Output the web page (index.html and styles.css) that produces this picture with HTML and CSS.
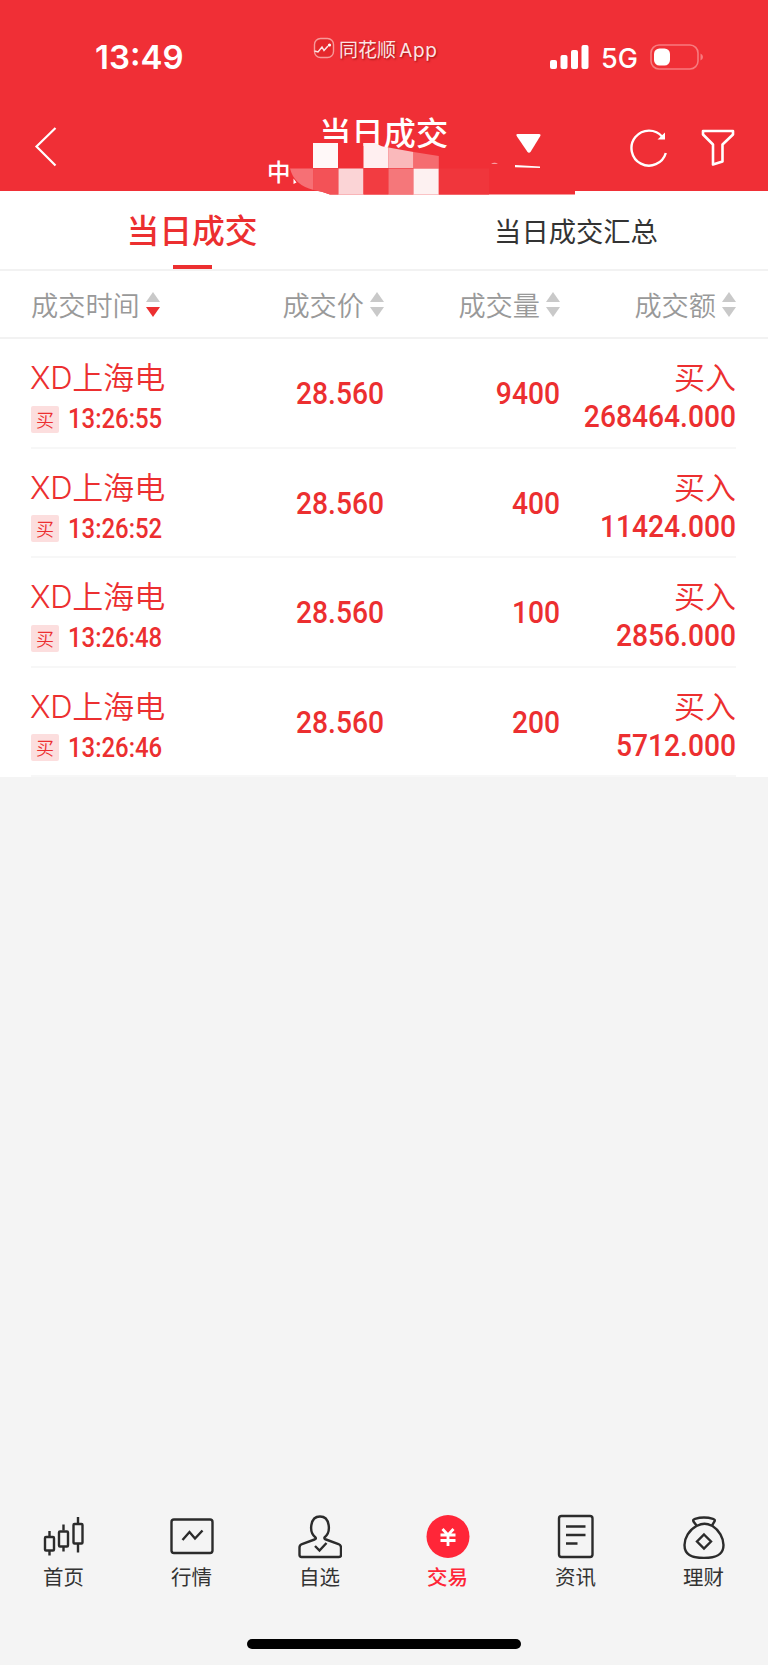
FILE: index.html
```html
<!DOCTYPE html>
<html lang="zh-CN">
<head>
    <meta charset="UTF-8">
    <meta name="viewport" content="width=device-width, initial-scale=1.0">
    <title>当日成交</title>

    <link rel="stylesheet" href="styles.css">

</head>
<body>

    <header class="header">

        <div class="status-bar">
            <div class="clock">13:49</div>
            <div class="app-name">
                <svg width="22" height="24" viewBox="0 -1.500 22 24" fill="none">
                    <rect x="1.500" y="1" width="19" height="19" rx="6" fill="#e5282c" stroke="#f79a9a" stroke-width="1.4"/>
                    <path d="M1.500 13.500L5 14.500L9 9.500L11 13L15 8.500" stroke="#fde4e4" stroke-width="1.5"/>
                    <circle cx="16.500" cy="7.500" r="1.600" fill="#fff"/>
                </svg>
                <span>同花顺 <b>App</b></span>
            </div>
            <div class="status-icons">
                <svg width="39" height="26" viewBox="0 0 39 26" fill="#fff">
                    <rect x="0" y="16" width="7" height="9" rx="2"/>
                    <rect x="10.500" y="11" width="7" height="14" rx="2"/>
                    <rect x="21" y="6" width="7" height="19" rx="2"/>
                    <rect x="31.500" y="1" width="7" height="24" rx="2"/>
                </svg>
                <span>5G</span>
                <svg width="54" height="26" viewBox="0 0 54 26" fill="none">
                    <rect x="1" y="1" width="47" height="24" rx="8" stroke="#f77b7f" stroke-width="1.6"/>
                    <rect x="4" y="4.500" width="16" height="17" rx="5.500" fill="#fff"/>
                    <path d="M50.500 9.500Q53 10.500 53 13T50.500 16.500Z" fill="#f77b7f"/>
                </svg>
            </div>
        </div>

        <div class="nav">
            <svg class="back" width="24" height="42" viewBox="0 0 24 42" fill="none" stroke="#fff" stroke-width="2.2">
                <path d="M21.500 2L2.500 20.500L21.500 39.500"/>
            </svg>
            <div class="nav-title">
                <h1>当日成交</h1>
                <div class="account">中</div>
            </div>
            <svg class="dropdown" width="28" height="38" viewBox="0 0 28 38" fill="#fff">
                <path d="M3.500 2H25Q27.500 2 26 4.500L16.800 19.500Q15 22 13.200 19.500L3 4.500Q1.500 2 3.500 2Z"/>
                <path d="M1 33L26 34.500V36L1 35.200Z"/>
            </svg>
            <svg class="refresh" width="40" height="40" viewBox="0 0 40 40" fill="none" stroke="#fff" stroke-width="2.400">
                <path d="M36.800 25A17.500 17.500 0 1 1 33.500 9"/>
                <path d="M36 4.500V11.500H28.500Z" fill="#fff" stroke="none"/>
            </svg>
            <svg class="filter" width="34" height="38" viewBox="0 0 34 38" fill="none" stroke="#fff" stroke-width="2.600" stroke-linejoin="round">
                <path d="M2 2H32V5.500L21.500 15.500V32.500L12 35.500V15.500L2 5.500Z"/>
            </svg>
        </div>

        <!-- mosaic over the account name -->
        <svg class="mosaic" width="320" height="60" viewBox="260 140 320 60">
            <path d="M313 190H575V194.500H330Q322 191 313 190Z" fill="#f02e35"/>
            <path d="M313 143H338V168H313Z" fill="#fff8f8"/>
            <path d="M338 143H363.500V168H338Z" fill="#f02e35"/>
            <path d="M363.500 143H375Q382 147 388.500 147.500V168H363.500Z" fill="#ffeff0"/>
            <path d="M388.500 147.500L413.500 152V168H388.500Z" fill="#fab9bb"/>
            <path d="M413.500 152L438.800 156V168H413.500Z" fill="#f56c70"/>
            <path d="M290 168.500H313.500V190Q294 185 290 168.500Z" fill="#f67075"/>
            <path d="M313.500 168.500H338.500V194.500H330Q322 191 313.500 190Z" fill="#f35257"/>
            <path d="M338.500 168.500H363.500V194.500H338.500Z" fill="#fbd4d6"/>
            <path d="M363.500 168.500H388.500V194.500H363.500Z" fill="#f23c41"/>
            <path d="M388.500 168.500H413.500V194.500H388.500Z" fill="#f5777a"/>
            <path d="M413.500 168.500H438.800V194.500H413.500Z" fill="#fdf1f1"/>
            <path d="M438.800 168.500H489V194.500H438.800Z" fill="#f0363c"/>
            <path d="M491 163.700Q494.500 162 498 163.700Z" fill="#fbc4c6"/>
            <path d="M293.500 178.500L296.500 182.500L293.500 184Z" fill="#fff"/>
        </svg>

    </header>

    <nav class="tabs">
        <div class="tab active"><span>当日成交</span></div>
        <div class="tab">当日成交汇总</div>
    </nav>

    <div class="grid columns">
        <div class="col">成交时间<i class="sort desc"></i></div>
        <div class="col">成交价<i class="sort"></i></div>
        <div class="col">成交量<i class="sort"></i></div>
        <div class="col">成交额<i class="sort"></i></div>
    </div>

    <main class="list">

        <div class="grid row">
            <div class="stock">
                <div class="name"><span>XD</span>上海电</div>
                <div class="time"><span class="tag">买</span><span class="clock-time">13:26:55</span></div>
            </div>
            <div class="num">28.560</div>
            <div class="num">9400</div>
            <div class="amount">
                <div class="name">买入</div>
                <div class="num">268464.000</div>
            </div>
        </div>

        <div class="grid row">
            <div class="stock">
                <div class="name"><span>XD</span>上海电</div>
                <div class="time"><span class="tag">买</span><span class="clock-time">13:26:52</span></div>
            </div>
            <div class="num">28.560</div>
            <div class="num">400</div>
            <div class="amount">
                <div class="name">买入</div>
                <div class="num">11424.000</div>
            </div>
        </div>

        <div class="grid row">
            <div class="stock">
                <div class="name"><span>XD</span>上海电</div>
                <div class="time"><span class="tag">买</span><span class="clock-time">13:26:48</span></div>
            </div>
            <div class="num">28.560</div>
            <div class="num">100</div>
            <div class="amount">
                <div class="name">买入</div>
                <div class="num">2856.000</div>
            </div>
        </div>

        <div class="grid row">
            <div class="stock">
                <div class="name"><span>XD</span>上海电</div>
                <div class="time"><span class="tag">买</span><span class="clock-time">13:26:46</span></div>
            </div>
            <div class="num">28.560</div>
            <div class="num">200</div>
            <div class="amount">
                <div class="name">买入</div>
                <div class="num">5712.000</div>
            </div>
        </div>

    </main>

    <footer class="footer">

        <div class="menu">
            <div class="item">
                <svg width="44" height="46" viewBox="0 0 44 46">
                    <path d="M7.500 18V23M7.500 38V42.500M21.500 11.500V17.500M21.500 34V38.500M36 4V10.500M36 31V39.500"/>
                    <rect x="3" y="24" width="9" height="13.500" rx="1"/>
                    <rect x="17" y="18.500" width="9" height="15" rx="1"/>
                    <rect x="31.500" y="11" width="9" height="19.500" rx="1"/>
                </svg>
                <span>首页</span>
            </div>
            <div class="item">
                <svg width="44" height="46" viewBox="0 0 44 46">
                    <rect x="1.500" y="6.500" width="41" height="33.500" rx="2.500"/>
                    <path d="M12.500 27L19.500 19L25 25.500L32.500 17.500"/>
                </svg>
                <span>行情</span>
            </div>
            <div class="item">
                <svg width="44" height="46" viewBox="0 0 44 46">
                    <path d="M17.500 24.500C10.500 19 12 3.500 22 3.500S33.500 19 26.500 24.500Q26 26 28 26.500L40.500 31Q43 32 43 34.500V42Q43 44 41 44H3.500Q1.500 44 1.500 42V34.500Q1.500 32 4 31L16.500 26.500Q18.500 26 17.500 24.500Z"/>
                    <path d="M17 33L21.500 37.500L28.500 30"/>
                </svg>
                <span>自选</span>
            </div>
            <div class="item active">
                <svg width="44" height="46" viewBox="0 0 44 46">
                    <circle cx="22" cy="23.500" r="21.500" fill="#ff2638" stroke="none"/>
                    <path d="M16.500 16L22 22L27.500 16M14.500 22H29.500M14.500 27.500H29.500M22 21V33" stroke="#fff" stroke-width="2.800"/>
                </svg>
                <span>交易</span>
            </div>
            <div class="item">
                <svg width="44" height="46" viewBox="0 0 44 46">
                    <rect x="5" y="3" width="33.500" height="41" rx="2.500"/>
                    <path d="M12 13.500H31.500M12 22H31.500M12 30.500H23.500"/>
                </svg>
                <span>资讯</span>
            </div>
            <div class="item">
                <svg width="44" height="46" viewBox="0 0 44 46">
                    <path d="M14.500 12.500L11.500 8.500Q10.500 6.500 13 5.800Q22 3.300 31 5.800Q33.500 6.500 32.500 8.500L30 12.500"/>
                    <path d="M14.500 13C21 10 24 10 30.500 13C37 17 41.500 25 41.500 32C41.500 41.500 35 45 22 45S2.500 41.500 2.500 32C2.500 25 7 17 14.500 13Z"/>
                    <path d="M22 21.500L29 28.500L22 35.500L15 28.500Z"/>
                </svg>
                <span>理财</span>
            </div>
        </div>

        <div class="home-bar"></div>

    </footer>

</body>
</html>
```
FILE: styles.css
```css
*
{
    margin: 0;
    padding: 0;
    box-sizing: border-box;
}

body
{
    display: flex;
    flex-direction: column;
    width: 768px;
    height: 1665px;
    background: #f4f4f4;
    font-family: "Noto Sans CJK SC", sans-serif;
    overflow: hidden;
}

svg
{
    display: block;
    flex: none;
}

.header
{
    position: relative;
    height: 191px;
    background: #f02f36;
    color: white;
}

.status-bar
{
    display: grid;
    grid-template-columns: 313px 1fr 218px;
    height: 110px;
    padding-top: 36px;
}

.clock
{
    padding-left: 95px;
    font: 600 33px/43px Inter, sans-serif;
}

.app-name
{
    display: flex;
    gap: 4px;
    font-size: 19px;
    line-height: 26px;
    color: #fde4e4;
    text-shadow: 1px 1px 2px rgb(120 0 0 / 70%);
}

.app-name b
{
    margin-left: -1px;
    font: 400 19px/26px Inter, sans-serif;
    letter-spacing: 0.6px;
}

.status-icons
{
    display: flex;
    height: 42px;
    align-items: center;
    font: 500 27px/42px Inter, sans-serif;
}

.status-icons span
{
    width: 61px;
    padding: 3px 0 0 12px;
    line-height: 42px;
}

.nav
{
    display: flex;
    padding-left: 34px;
}

.back
{
    margin-top: 16px;
}

.nav-title
{
    width: 456px;
    padding-left: 209px;
}

.nav-title h1
{
    margin-top: -1px;
    padding-left: 52px;
    font-size: 32.3px;
    font-weight: 500;
    line-height: 44px;
}

.account
{
    font-size: 23.5px;
    font-weight: 500;
    line-height: 37px;
}

.dropdown
{
    margin-top: 22px;
}

.refresh
{
    margin: 18px 0 0 87px;
}

.filter
{
    margin: 19px 0 0 32px;
}

.mosaic
{
    position: absolute;
    left: 260px;
    top: 140px;
    z-index: 1;
}

.tabs
{
    display: flex;
    height: 80px;
    background: white;
    border-bottom: 2px solid #f2f2f2;
}

.tab
{
    width: 50%;
    text-align: center;
    font-size: 27.3px;
    line-height: 79px;
    color: #333;
}

.tab.active
{
    display: flex;
    flex-direction: column;
    align-items: center;
    font-size: 32.8px;
    font-weight: 500;
    line-height: 75px;
    color: #ec2f30;
}

.tab.active::after
{
    content: '';
    width: 39px;
    height: 4px;
    margin-top: -1px;
    background: #ec2f30;
}

.grid
{
    display: grid;
    grid-template-columns: 177px 176px 176px 176px;
}

.columns
{
    height: 68px;
    padding-left: 31px;
    background: white;
    border-bottom: 2px solid #f2f2f2;
}

.col
{
    display: flex;
    align-items: center;
    justify-content: flex-end;
    font-size: 27.2px;
    font-weight: 350;
    line-height: 66px;
    color: #999;
}

.col:first-child
{
    justify-content: flex-start;
}

.sort
{
    display: flex;
    flex-direction: column;
    gap: 5px;
    margin-left: 6px;
}

.sort::before,
.sort::after
{
    content: '';
    border: 0 solid transparent;
    border-left-width: 7px;
    border-right-width: 7px;
    border-bottom: 10px solid #c9c9c9;
}

.sort::after
{
    border-top: 10px solid #c9c9c9;
    border-bottom-width: 0;
}

.sort.desc::after
{
    border-top-color: #ec2f30;
}

.list
{
    padding-left: 31px;
    background: white;
    color: #ec2f30;
}

.row
{
    width: 705px;
    height: 109.5px;
    border-bottom: 2px solid #f7f7f7;
}

.name
{
    font-size: 31px;
    font-weight: 350;
    line-height: 37px;
    white-space: nowrap;
}

.name span
{
    margin-left: -1px;
    font-family: Inter, sans-serif;
    font-weight: 350;
    letter-spacing: -0.3px;
}

.stock,
.amount
{
    padding-top: 18px;
}

.time
{
    display: flex;
    align-items: center;
    gap: 9px;
    margin-top: 2px;
    font: 500 27.5px/42px Roboto, sans-serif;
}

.clock-time
{
    transform: scaleX(0.87);
    transform-origin: left;
}

.tag
{
    width: 28px;
    height: 27px;
    border-radius: 2px;
    background: #fcdede;
    text-align: center;
    font: 350 18px/26px "Noto Sans CJK SC", sans-serif;
}

.num
{
    font: 500 31px/109px Roboto, sans-serif;
    text-align: right;
    transform: scaleX(0.91);
    transform-origin: right;
}

.amount .name
{
    text-align: right;
}

.amount .num
{
    margin-top: 3px;
    line-height: 40px;
}

.footer
{
    margin-top: auto;
    height: 152px;
}

.menu
{
    display: grid;
    grid-template-columns: repeat(6, 128px);
}

.item
{
    display: flex;
    flex-direction: column;
    align-items: center;
    font-size: 20.5px;
    line-height: 32px;
    color: #333;
}

.item svg
{
    margin-left: -1px;
    fill: none;
    stroke: #2b2b2b;
    stroke-width: 2.4;
}

.item span
{
    margin: 1px 0 0 -1px;
}

.item.active
{
    color: #ff2638;
    font-weight: 500;
}

.home-bar
{
    width: 274px;
    height: 10px;
    margin: 47px auto 0;
    border-radius: 5px;
    background: black;
}
```
